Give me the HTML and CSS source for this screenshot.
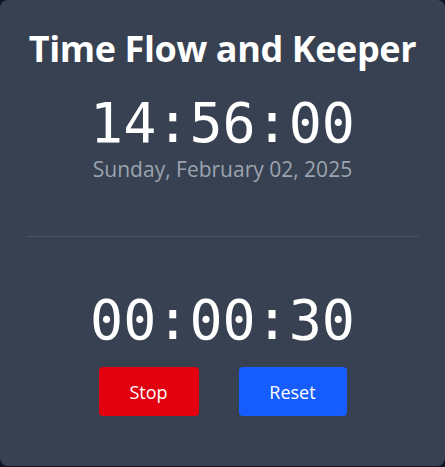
FILE: index.html
```html
<!DOCTYPE html>
<html lang="en">
<head>
<meta charset="utf-8">
<title>Time Flow and Keeper</title>
<link rel="stylesheet" href="styles.css">
</head>
<body>
<main class="card">
  <h1 class="title">Time Flow and Keeper</h1>
  <div class="clock">14:56:00</div>
  <div class="date">Sunday, February 02, 2025</div>
  <hr class="divider">
  <div class="timer">00:00:30</div>
  <div class="buttons">
    <button class="btn btn-stop">Stop</button>
    <button class="btn btn-reset">Reset</button>
  </div>
</main>
</body>
</html>
```
FILE: styles.css
```css
html, body {
  margin: 0;
  padding: 0;
}
body {
  background: #0f1623;
  font-family: "Open Sans", "Noto Sans", sans-serif;
}
.card {
  box-sizing: border-box;
  height: 466px;
  background: #374151;
  border-radius: 8px;
  padding: 25px 27px 0;
  text-align: center;
  color: #ffffff;
}
.title {
  margin: 0 -20px;
  font-size: 36px;
  line-height: 48px;
  font-weight: 700;
  letter-spacing: -0.4px;
  white-space: nowrap;
}
.clock, .timer {
  font-family: "DejaVu Sans Mono", monospace;
  font-size: 55px;
  line-height: 64px;
}
.clock {
  margin-top: 18px;
}
.date {
  font-size: 21px;
  line-height: 28px;
  color: #9ca3af;
}
.divider {
  margin: 53px 0 0;
  border: 0;
  height: 1px;
  background: #4b5563;
}
.timer {
  margin-top: 51px;
}
.buttons {
  display: flex;
  justify-content: center;
  gap: 40px;
  margin-top: 15px;
}
.btn {
  border: 0;
  border-radius: 4px;
  color: #ffffff;
  font-family: "Open Sans", "Noto Sans", sans-serif;
  font-size: 18px;
  height: 49px;
  padding: 0 30px;
}
.btn-stop {
  background: #e3000f;
  width: 100px;
}
.btn-reset {
  background: #165dff;
  width: 108px;
}
```
